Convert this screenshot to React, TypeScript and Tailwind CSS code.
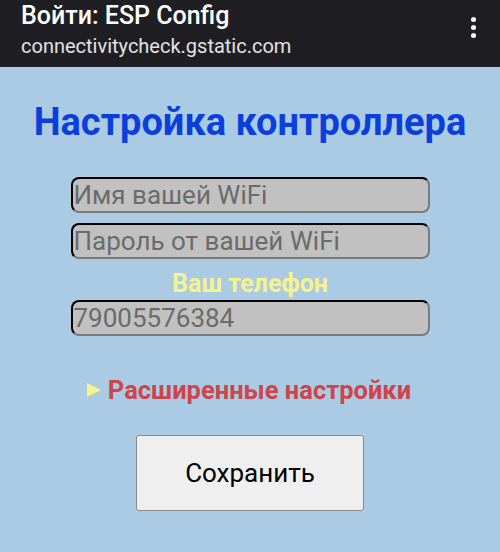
import React from "react";

const fieldClass =
  "box-border h-[36px] w-[359px] rounded-[8px] border-2 border-t-black border-l-black border-r-[#7a7a7a] border-b-[#7a7a7a] bg-[#c1c1c1] px-[1px] text-[26px] leading-none text-[#6b6b6b] placeholder:text-[#6b6b6b] outline-none";

export default function App() {
  return (
    <div className="flex h-[552px] w-[500px] flex-col overflow-hidden bg-[#aacbe3] font-['Roboto','Liberation_Sans',sans-serif]">
      <header className="flex h-[67px] shrink-0 items-start justify-between bg-[#1f1f23] pl-[21px] pr-[24px] pt-[2px]">
        <div className="flex flex-col">
          <span className="text-[25px] font-medium leading-[28px] text-white">Войти: ESP Config</span>
          <span className="mt-[4px] text-[20px] leading-[24px] text-[#e2e2e2]">connectivitycheck.gstatic.com</span>
        </div>
        <div className="mt-[15px] flex flex-col items-center gap-[3px]">
          <span className="block h-[5px] w-[5px] rounded-full bg-white" />
          <span className="block h-[5px] w-[5px] rounded-full bg-white" />
          <span className="block h-[5px] w-[5px] rounded-full bg-white" />
        </div>
      </header>

      <main className="flex flex-col items-center">
        <h1 className="mt-[33px] text-[38px] font-bold leading-[44px] text-[#0b3fdc]">Настройка контроллера</h1>

        <form className="mt-[33px] flex flex-col items-center">
          <input className={fieldClass} placeholder="Имя вашей WiFi" />
          <input className={`${fieldClass} mt-[10px]`} placeholder="Пароль от вашей WiFi" />
          <label className="mt-[11px] text-[25px] font-bold leading-[28px] text-[#f8f28a]">Ваш телефон</label>
          <input className={`${fieldClass} mt-[2px]`} defaultValue="79005576384" />

          <div className="mt-[39px] flex items-center gap-[7px] pr-[2px]">
            <span className="block h-0 w-0 shrink-0 border-y-[7px] border-l-[14px] border-y-transparent border-l-[#f8f28a]" />
            <span className="text-[25.5px] font-bold leading-[30px] text-[#cf444c]">Расширенные настройки</span>
          </div>

          <button
            type="button"
            className="mt-[30px] h-[76px] w-[228px] rounded-[3px] border border-[#8a8a8a] bg-[#efefef] text-[26px] text-black"
          >
            Сохранить
          </button>
        </form>
      </main>
    </div>
  );
}
